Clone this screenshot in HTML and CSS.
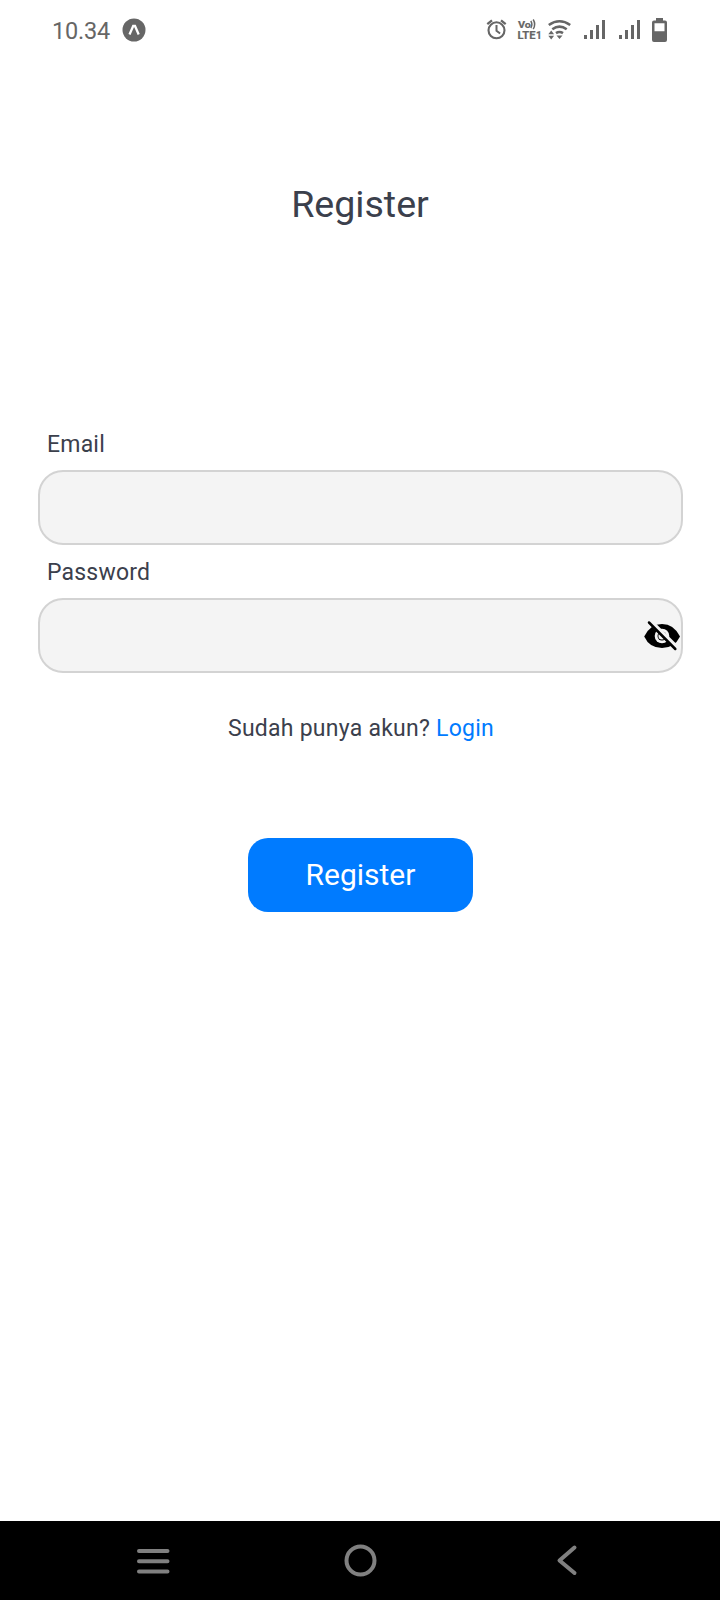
FILE: index.html
```html
<!DOCTYPE html>
<html lang="id">
<head>
<meta charset="utf-8">
<title>Register</title>
<link rel="stylesheet" href="styles.css">
</head>
<body>
<div class="screen">
  <header class="status">
    <span class="time">10.34</span>
    <svg class="app-icon" width="24" height="24" viewBox="0 0 24 24"><circle cx="12" cy="12" r="11.5" fill="#666"/><path d="M7.500 16.500 L11.200 8h1.800L16.700 16.500" fill="none" stroke="#fff" stroke-width="2.300"/></svg>
    <svg class="status-icons" width="185" height="30" viewBox="485 15 185 30" fill="none" stroke="#666">
      <circle cx="496.500" cy="30.300" r="8" stroke-width="2.100"/>
      <path d="M496.500 25v5.800l3.600 2.700" stroke-width="2"/>
      <path d="M487.300 24.200l4.700-3.800M505.700 24.200l-4.700-3.800" stroke-width="2.300"/>
      <g fill="#666" stroke="#666" stroke-width=".2" font-family="Roboto, sans-serif" font-weight="700">
        <text x="518" y="28.300" font-size="9.500" textLength="13" lengthAdjust="spacingAndGlyphs">Vo</text>
        <text x="517.500" y="39" font-size="11" textLength="18" lengthAdjust="spacingAndGlyphs">LTE</text>
        <text x="536" y="39" font-size="10">1</text>
      </g>
      <path d="M530.800 21q2.200 3.500 0 7M533.200 19.500q3 5 0 9.500" stroke-width="1.500"/>
      <path d="M548.800 25q10.700-7.500 21.400 0M552.300 29.200q7.200-5 14.400 0M556 33.200q3.500-2.300 7 0" stroke-width="2.600"/>
      <path d="M556.500 35.600h6l-3 3.400zM548.300 34.200l2.900-3.800 2.900 3.800zM548.300 35.800l2.900 3.600 2.900-3.600z" fill="#666" stroke="none"/>
      <path d="M584 35h3v4h-3zM590 30h3v9h-3zM596 25h3v14h-3zM602 20h3v19h-3zM619 35h3v4h-3zM625 30h3v9h-3zM631 25h3v14h-3zM637 20h3v19h-3z" fill="#666" stroke="none"/>
      <path fill-rule="evenodd" d="M656 18h7v2.500h2q2 0 2 2V40q0 2-2 2h-11q-2 0-2-2V22.500q0-2 2-2h2zM654.500 23.200v8h10v-8z" fill="#666" stroke="none"/>
    </svg>
  </header>
  <main class="content">
    <h1 class="title">Register</h1>
    <form class="form">
      <label class="label" for="email">Email</label>
      <div class="field"><input class="input" id="email" type="email"></div>
      <label class="label" for="password">Password</label>
      <div class="field">
        <input class="input" id="password" type="password">
        <svg class="eye" width="38" height="34" viewBox="643 619 38 34">
          <path d="M644.200 636.500q6-12.500 17.800-12.500t18 12.500q-5.500 11.500-18 11.500t-17.800-11.500z" fill="#000"/>
          <circle cx="662" cy="636" r="7.300" fill="#f4f4f4"/>
          <circle cx="662" cy="636" r="4.500" fill="#000"/>
          <circle cx="662" cy="636" r="3.600" fill="#f4f4f4"/>
          <path d="M650 621.300L677.500 648.500" stroke="#f4f4f4" stroke-width="5"/>
          <path d="M649 622.500L675.300 649" stroke="#000" stroke-width="2.500" stroke-linecap="round"/>
        </svg>
      </div>
      <p class="prompt">Sudah punya akun? <a class="link">Login</a></p>
      <button class="submit" type="button">Register</button>
    </form>
  </main>
  <nav class="nav">
    <svg width="720" height="79" viewBox="0 1521 720 79" fill="none" stroke="#808080" stroke-width="4" stroke-linecap="round">
      <path d="M139 1551h28.500M139 1561.300h28.500M139 1571.500h28.500"/>
      <circle cx="360.500" cy="1560.500" r="14"/>
      <path d="M574.500 1547.500L559.500 1560.500L574.500 1573" stroke-linejoin="round"/>
    </svg>
  </nav>
</div>
</body>
</html>
```
FILE: styles.css
```css
body {
  margin: 0;
  background: #fff;
  color: #3b404c;
  font-family: Roboto, sans-serif;
}

.screen {
  display: flex;
  flex-direction: column;
  width: 720px;
  height: 1600px;
}

.status {
  display: flex;
  align-items: center;
  height: 60px;
  box-sizing: border-box;
  padding: 0 50px 0 52px;
  color: #666;
}

.time {
  width: 70px;
  padding-top: 2px;
  font-size: 23.5px;
  line-height: 28px;
  letter-spacing: -0.2px;
  white-space: nowrap;
}

.status-icons {
  margin-left: auto;
}

.content {
  flex: 1;
  padding: 120px 38px 0 38px;
}

.title {
  margin: 0 0 203px;
  font-size: 37.6px;
  font-weight: 400;
  line-height: 48px;
  text-align: center;
}

.form {
  display: flex;
  flex-direction: column;
  margin-right: -1px;
}

.label {
  height: 39px;
  padding-left: 9px;
  font-size: 23px;
  line-height: 27px;
  letter-spacing: 0.2px;
}

.field {
  display: flex;
  align-items: center;
  box-sizing: border-box;
  height: 75px;
  margin-bottom: 14px;
  border: 2px solid #d3d3d3;
  border-radius: 25px;
  background: #f4f4f4;
}

.input {
  flex: 1;
  min-width: 0;
  border: 0;
  outline: 0;
  padding: 0 20px;
  background: none;
  font: inherit;
}

.prompt {
  margin: 27px 0 0;
  padding-left: 1px;
  font-size: 23px;
  line-height: 30px;
  letter-spacing: 0.25px;
  text-align: center;
}

.link {
  color: #007bff;
}

.submit {
  align-self: center;
  width: 225px;
  height: 74px;
  margin-top: 94px;
  padding: 0 0 2px;
  border: 0;
  border-radius: 20px;
  background: #007bff;
  color: #fff;
  font: 30px Roboto, sans-serif;
}

.nav {
  height: 79px;
  background: #000;
}
```
